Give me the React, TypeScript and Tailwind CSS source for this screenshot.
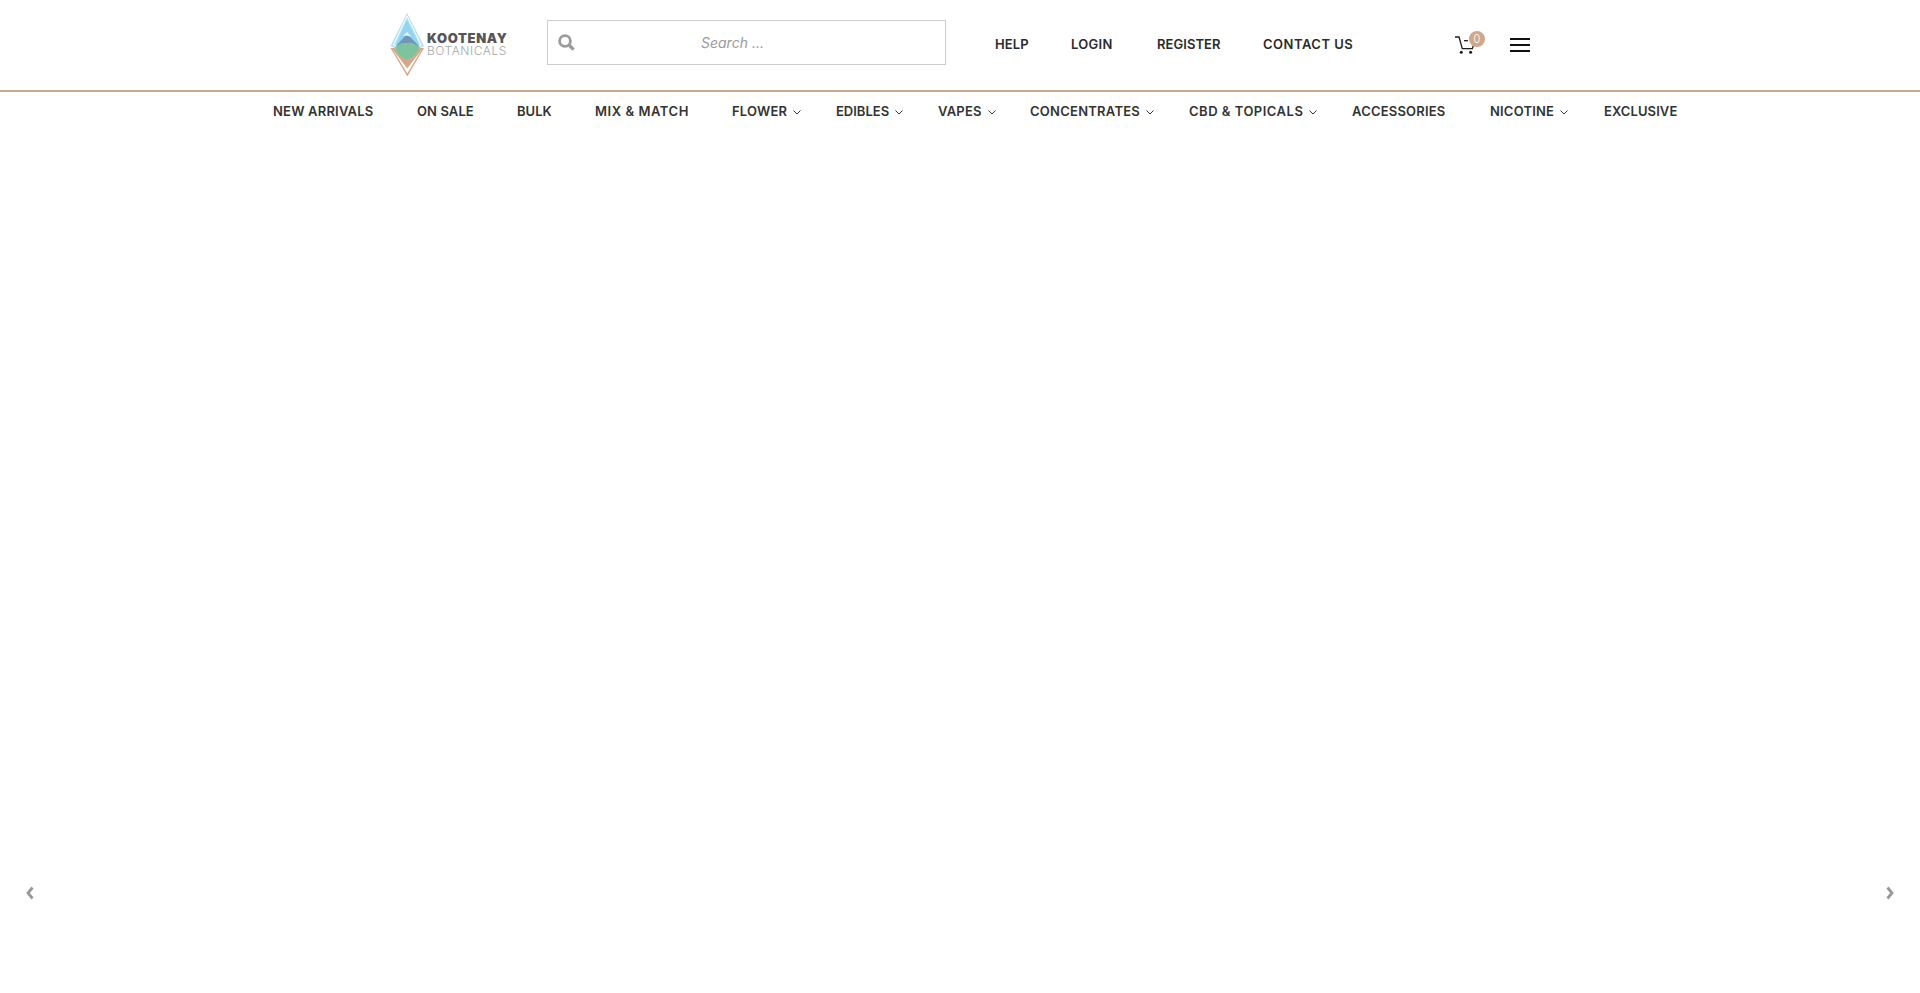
// App.tsx
import React from 'react';

const navItems = [
    { label: 'NEW ARRIVALS', width: 'w-[144px]', tracking: 'tracking-[0.2px]' },
    { label: 'ON SALE', width: 'w-[100px]', tracking: 'tracking-[0.1px]' },
    { label: 'BULK', width: 'w-[78px]', tracking: 'tracking-[0px]' },
    { label: 'MIX & MATCH', width: 'w-[137px]', tracking: 'tracking-[0.55px]' },
    { label: 'FLOWER', width: 'w-[104px]', tracking: 'tracking-[0.2px]', caret: true },
    { label: 'EDIBLES', width: 'w-[102px]', tracking: 'tracking-[0px]', caret: true },
    { label: 'VAPES', width: 'w-[92px]', tracking: 'tracking-[0.2px]', caret: true },
    { label: 'CONCENTRATES', width: 'w-[159px]', tracking: 'tracking-[0.25px]', caret: true },
    { label: 'CBD & TOPICALS', width: 'w-[163px]', tracking: 'tracking-[0.5px]', caret: true },
    { label: 'ACCESSORIES', width: 'w-[138px]', tracking: 'tracking-[0.2px]' },
    { label: 'NICOTINE', width: 'w-[114px]', tracking: 'tracking-[0.2px]', caret: true },
    { label: 'EXCLUSIVE', width: 'w-[73px]', tracking: 'tracking-[0.1px]' },
];

const topLinks = [
    { label: 'HELP', width: 'w-[76px]', tracking: 'tracking-[0.1px]' },
    { label: 'LOGIN', width: 'w-[86px]', tracking: 'tracking-[0.3px]' },
    { label: 'REGISTER', width: 'w-[106px]', tracking: 'tracking-[0.05px]' },
    { label: 'CONTACT US', width: 'w-[192px]', tracking: 'tracking-[0.5px]' },
];

const Logo: React.FC = () => (
    <div className="flex items-center w-[157px] shrink-0">
        <svg width="36" height="64" viewBox="0 0 36 64" className="shrink-0 ml-[-1px]">
            <polygon points="1.5,35 18.3,63.5 35,35" fill="#d2a98d" />
            <polygon points="3.5,36 18.3,60.5 33,36" fill="#ffffff" />
            <polygon points="2.5,35 18.3,55.5 34,35" fill="#d2a98d" />
            <polygon points="18,0 1.5,33 18,42 35,33" fill="#b4e2f6" />
            <polygon points="18,3 4.5,32 18,39 32,32" fill="none" stroke="#ffffff" strokeWidth="1" />
            <polygon points="18,7 7,31 18,36 30,31" fill="#93d4f0" />
            <polygon points="18,21 7,33 18,37 30,33" fill="#6f97ba" />
            <polygon points="6,34 13,30 23,30 31,34 26,42 18,47 10,42" fill="#7cc49c" />
            <polygon points="18,19 14,23 17.5,22.5 22,23.5" fill="#e8f6fb" />
        </svg>
        <div className="ml-[2px] mt-[-1px] leading-none">
            <div className="text-[13px] font-black tracking-[0.65px] text-[#55565a] font-['Inter',sans-serif] leading-[13px]">KOOTENAY</div>
            <div className="text-[12px] font-light tracking-[0.55px] text-[#a5a6a9] font-['Inter',sans-serif] leading-[12px]">BOTANICALS</div>
        </div>
    </div>
);

const CartIcon: React.FC = () => (
    <div className="relative w-[22px] h-[20px]">
        <svg width="20" height="20" viewBox="0 0 20 20" fill="none" stroke="#1c1c1c" strokeWidth="1.3" className="absolute left-0 top-0">
            <path d="M0 2 H4 L7.3 13.7 H17.3 L19 8.7" />
            <path d="M9 5.7 H13" />
            <circle cx="6.3" cy="17.3" r="1.5" fill="#1c1c1c" stroke="none" />
            <circle cx="15.6" cy="17.3" r="1.5" fill="#1c1c1c" stroke="none" />
        </svg>
        <span className="absolute left-[14px] top-[-4px] w-[16px] h-[16px] rounded-full bg-[#cfa78c] text-white text-[11px] font-light leading-[16px] text-center font-['Inter',sans-serif]">0</span>
    </div>
);

const App: React.FC = () => {
    return (
        <div className="min-h-screen h-[993px] bg-white flex flex-col font-['Inter',sans-serif] text-[#2b2b2b] overflow-hidden">
            <header className="h-[92px] shrink-0 border-b-2 border-[#cda78c] flex items-center pl-[390px]">
                <Logo />
                <form className="relative w-[399px] h-[45px] mb-[6px] shrink-0">
                    <svg width="17" height="17" viewBox="0 0 17 17" fill="none" stroke="#9b9b9b" className="absolute left-[11px] top-[14px]">
                        <circle cx="7" cy="7" r="5.4" strokeWidth="2.8" />
                        <path d="M11 11 L15.6 15.6" strokeWidth="3.2" />
                    </svg>
                    <input
                        type="text"
                        placeholder="Search ..."
                        className="w-full h-full border border-[#cccccc] pl-[153px] text-[14px] italic outline-none placeholder:text-[#9a9a9a]"
                    />
                </form>
                <nav className="flex items-center ml-[49px] shrink-0">
                    {topLinks.map(link => (
                        <a key={link.label} className={`${link.width} ${link.tracking} text-[13px] font-semibold whitespace-nowrap`}>{link.label}</a>
                    ))}
                </nav>
                <CartIcon />
                <div className="ml-[33px] w-[20px] flex flex-col gap-[4px]">
                    <span className="h-[2px] bg-[#111111]" />
                    <span className="h-[2px] bg-[#111111]" />
                    <span className="h-[2px] bg-[#111111]" />
                </div>
            </header>

            <nav className="h-[40px] shrink-0 flex items-center pl-[273px]">
                {navItems.map(item => (
                    <a key={item.label} className={`${item.width} ${item.tracking} shrink-0 flex items-center gap-[5px] text-[13px] font-semibold whitespace-nowrap text-[#333333]`}>
                        {item.label}
                        {item.caret && (
                            <svg width="10" height="10" viewBox="0 0 10 10" fill="none" stroke="#333333" strokeWidth="1" className="shrink-0">
                                <path d="M1.5 3.5 L5 7 L8.5 3.5" />
                            </svg>
                        )}
                    </a>
                ))}
            </nav>

            <main className="flex-1 flex justify-between items-end px-[26px] pb-[93px]">
                <button type="button" aria-label="Previous">
                    <svg width="8" height="14" viewBox="0 0 8 14" fill="none" stroke="#999999" strokeWidth="2.8"><path d="M6.5 1.5 L2 7 L6.5 12.5" /></svg>
                </button>
                <button type="button" aria-label="Next">
                    <svg width="8" height="14" viewBox="0 0 8 14" fill="none" stroke="#999999" strokeWidth="2.8"><path d="M1.5 1.5 L6 7 L1.5 12.5" /></svg>
                </button>
            </main>
        </div>
    );
};

export default App;
